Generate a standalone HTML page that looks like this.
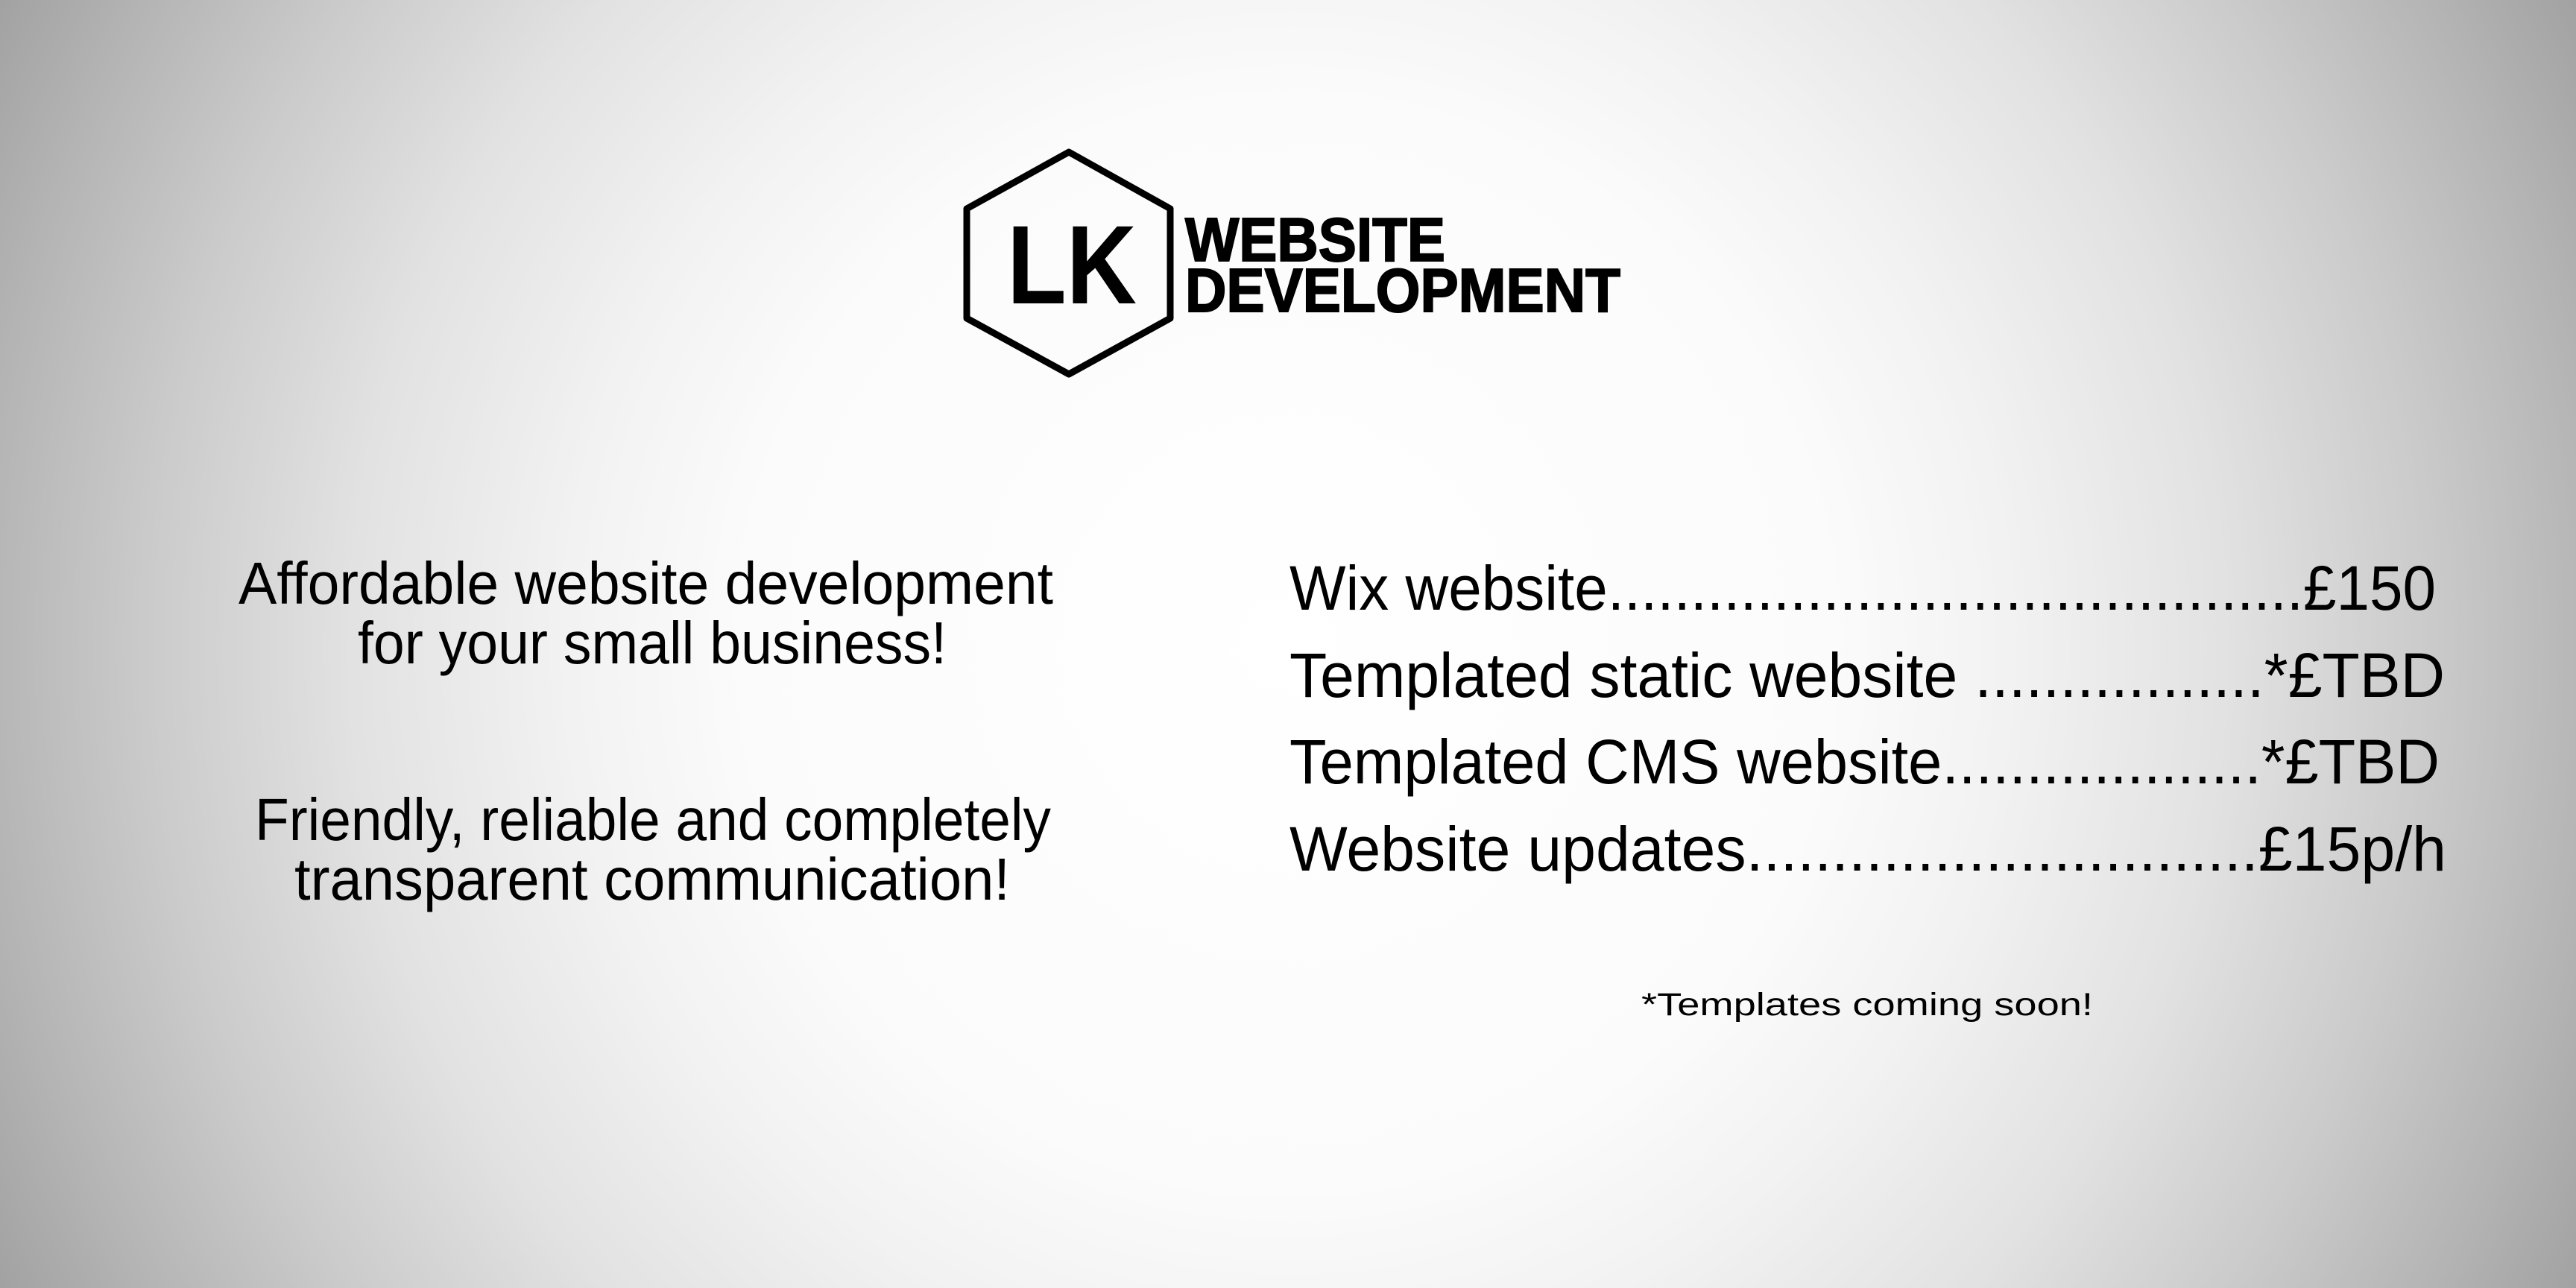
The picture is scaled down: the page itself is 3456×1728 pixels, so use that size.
<!DOCTYPE html>
<html><head><meta charset="utf-8"><style>
html,body{margin:0;padding:0}
body{width:3456px;height:1728px;overflow:hidden;background:radial-gradient(circle 1932px at 50% 50%,#ffffff 0%,#fbfbfb 38%,#f2f2f2 50%,#e2e2e2 65%,#cbcbcb 79%,#b4b4b4 91%,#a2a2a2 100%)}
svg{position:absolute;left:0;top:0}
</style></head><body>
<svg width="3456" height="1728" viewBox="0 0 3456 1728" xmlns="http://www.w3.org/2000/svg">
<polygon points="1434,204 1570,280 1570,427 1434,502 1297,427 1297,280" fill="none" stroke="#000" stroke-width="9" stroke-linejoin="round"/>
<text x="1351" y="407" font-family="Liberation Sans" font-weight="bold" font-size="150" textLength="174" lengthAdjust="spacingAndGlyphs" fill="#000">LK</text>
<text x="1590" y="350" font-family="Liberation Sans" font-weight="bold" font-size="83" textLength="349" lengthAdjust="spacingAndGlyphs" fill="#000" stroke="#000" stroke-width="2">WEBSITE</text>
<text x="1590" y="418" font-family="Liberation Sans" font-weight="bold" font-size="83" textLength="584" lengthAdjust="spacingAndGlyphs" fill="#000" stroke="#000" stroke-width="2">DEVELOPMENT</text>
<g font-family="Liberation Sans" font-size="80" fill="#000">
<text x="320" y="810" textLength="1093" lengthAdjust="spacingAndGlyphs">Affordable website development</text>
<text x="480" y="890" textLength="790" lengthAdjust="spacingAndGlyphs">for your small business!</text>
<text x="342" y="1127" textLength="1068" lengthAdjust="spacingAndGlyphs">Friendly, reliable and completely</text>
<text x="395" y="1207" textLength="960" lengthAdjust="spacingAndGlyphs">transparent communication!</text>
</g>
<g font-family="Liberation Sans" font-size="84" fill="#000">
<text x="1730" y="818" textLength="1538" lengthAdjust="spacingAndGlyphs">Wix website..........................................£150</text>
<text x="1730" y="935" textLength="1550" lengthAdjust="spacingAndGlyphs">Templated static website .................*£TBD</text>
<text x="1730" y="1051" textLength="1543" lengthAdjust="spacingAndGlyphs">Templated CMS website...................*£TBD</text>
<text x="1730" y="1168" textLength="1552" lengthAdjust="spacingAndGlyphs">Website updates..............................£15p/h</text>
</g>
<text x="2202" y="1362" font-family="Liberation Sans" font-size="43" textLength="606" lengthAdjust="spacingAndGlyphs" fill="#000">*Templates coming soon!</text>
</svg>
</body></html>
